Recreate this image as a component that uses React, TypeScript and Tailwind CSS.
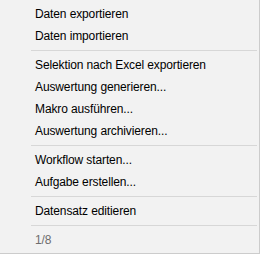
import React from 'react';

const groups: string[][] = [
  ['Daten exportieren', 'Daten importieren'],
  ['Selektion nach Excel exportieren', 'Auswertung generieren...', 'Makro ausführen...', 'Auswertung archivieren...'],
  ['Workflow starten...', 'Aufgabe erstellen...'],
  ['Datensatz editieren'],
];

const Item = ({ label, muted }: { label: string; muted?: boolean }) => (
  <div className={`h-[22px] flex items-center pl-[35px] text-[12px] leading-none tracking-[-0.12px] ${muted ? 'text-[#6d6d6d]' : 'text-black'}`}>
    {label}
  </div>
);

const Separator = () => (
  <div className="h-[7px] flex items-center pl-[31px] pr-[2px]">
    <div className="h-px w-full bg-[#d7d7d7]" />
  </div>
);

export default function App() {
  return (
    <div
      className="w-[260px] h-[254px] bg-[#f2f2f2] border-r border-b border-[#cccccc] pt-[3px] flex flex-col"
      style={{ fontFamily: '"Liberation Sans", Arial, sans-serif' }}
    >
      {groups.map((g, gi) => (
        <React.Fragment key={gi}>
          {g.map((label) => (
            <Item key={label} label={label} />
          ))}
          <Separator />
        </React.Fragment>
      ))}
      <Item label="1/8" muted />
    </div>
  );
}
